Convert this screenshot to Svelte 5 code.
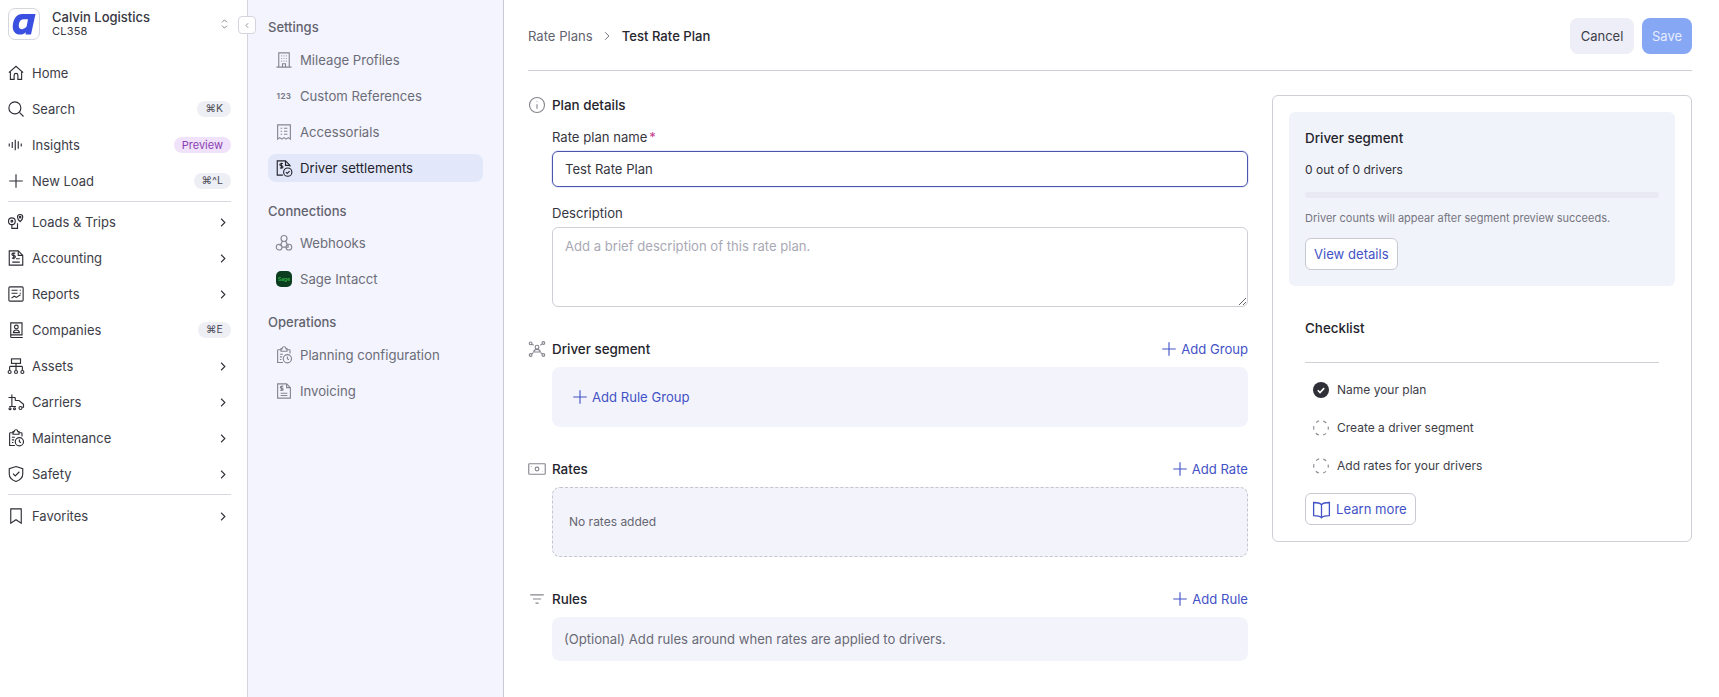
<script>
  const icons = {
    home: '<path d="M2.500 11.500 12 3l9.500 8.500"/><path d="M4.500 10v10.500h5V15a2.500 2.500 0 0 1 5 0v5.500h5V10"/>',
    search: '<circle cx="10.500" cy="10.500" r="8"/><path d="m16.500 16.500 5.500 5.500"/>',
    insights: '<path d="M3 10v4M7 8v8M11 5v14M15 7v10M19 10v4"/>',
    plus: '<path d="M12 3v18M3 12h18"/>',
    loads: '<circle cx="6.500" cy="11" r="4.500"/><circle cx="6.500" cy="11" r="1.200"/><path d="M6.500 15.500v5h7.500v-7"/><path d="M17.500 2a3.500 3.500 0 0 1 3.500 3.500c0 2.500-3.500 6-3.500 6s-3.500-3.500-3.500-6A3.500 3.500 0 0 1 17.500 2z"/><circle cx="17.500" cy="5.500" r="1"/>',
    accounting: '<path d="M3 2.500h12l6 6v13H3z"/><path d="M15 2.500v6h6"/><path d="M11 5.500H8.200a1.500 1.500 0 0 0 0 3.300h1.300a1.500 1.500 0 0 1 0 3.300H6.500M9 4.500v9"/><path d="M12 13h5M7 17.500h10"/>',
    reports: '<rect x="2.500" y="2.500" width="19" height="19" rx="1.500"/><path d="M6 7h8M6 11h8M17 7h1.500M17 11h1.500M6 17.500l3.500-2.500 3 1.500 5.500-3.500"/>',
    companies: '<path d="M5 2.500h15v16H5z"/><path d="M5 18.500v2.500a1 1 0 0 0 1 1h15"/><circle cx="12.500" cy="8" r="2.500"/><path d="M8.500 15.500c.3-2.500 1.800-3.500 4-3.500s3.700 1 4 3.500z"/>',
    assets: '<rect x="6" y="2.500" width="12" height="6"/><path d="M3.500 12.500h17M12 8.500v9M3.500 12.500v5M20.500 12.500v5"/><circle cx="3.500" cy="20" r="2"/><circle cx="12" cy="20" r="2"/><circle cx="20.500" cy="20" r="2"/>',
    carriers: '<path d="M2 6h9M6.500 2v16M3 18h9"/><path d="M11 10h5l6 5v4h-2M11 6v4"/><circle cx="4" cy="21" r="1.300"/><circle cx="10" cy="21" r="1.300"/><circle cx="18" cy="20" r="2"/>',
    maintenance: '<path d="M9 5H4.500a1 1 0 0 0-1 1v16h7"/><path d="M8 5V3.500h1.500a2.500 2.500 0 0 1 5 0H16V7H8z"/><path d="M16 5h3a1 1 0 0 1 1 1v4"/><path d="M6.500 11h4M6.500 14.500h3M6.500 18h2"/><circle cx="16.500" cy="17" r="5.500"/><path d="M16.500 14V17l2 1.200"/>',
    safety: '<path d="M12 2 21 5v7c0 5-3.500 8-9 10-5.500-2-9-5-9-10V5z"/><path d="m8 11.500 3 3 5.500-5.500"/>',
    bookmark: '<path d="M5 2.500h14v19l-7-4.500-7 4.500z"/>',
    building: '<path d="M5 21.500V2.500h14v19M2 21.500h20"/><path d="M8.500 6.500h1M11.500 6.500h1M14.500 6.500h1M8.500 10h1M11.500 10h1M14.500 10h1M8.500 13.500h1M11.500 13.500h1M14.500 13.500h1M10 21.500V17h4v4.500"/>',
    receipt: '<path d="M3.500 2.500h17v19l-2.800-2-2.800 2-2.900-2-2.800 2-2.800-2-2.900 2z"/><path d="M7.500 7h2M12 7h4.500M7.500 11h2M12 11h4.500M7.500 15h2M12 15h4.500"/>',
    settle: '<path d="M10.500 21.500H3V2.500h11l6 6v1.500"/><path d="M14 2.500v6h6"/><path d="M10.500 6H8a1.300 1.300 0 0 0 0 3h1a1.300 1.300 0 0 1 0 3H6.500M8.500 5v8"/><circle cx="17" cy="17.500" r="5.500"/><path d="m14.500 17.500 1.800 1.800 3.200-3.200"/>',
    webhook: '<circle cx="12" cy="6" r="4"/><circle cx="5.500" cy="17.500" r="3.800"/><circle cx="18.500" cy="17.500" r="3.800"/><path d="M10 9.500 6.500 16M14 9.500l4 7M9.300 17.500h9"/>',
    planning: '<path d="M9 5H4.500a1 1 0 0 0-1 1v16h7"/><path d="M8 5V3.500h1.500a2.500 2.500 0 0 1 5 0H16V7H8z"/><path d="M16 5h3a1 1 0 0 1 1 1v4"/><path d="M6.500 11h4M6.500 14.500h3M6.500 18h2"/><circle cx="16.500" cy="17" r="5.500"/><path d="M16.500 14V17l2 1.200"/>',
    invoice: '<path d="M3.500 2.500h12l5 5v14h-17z"/><path d="M15.500 2.500v5h5"/><path d="M11 5.500H8.500a1.200 1.200 0 0 0 0 2.800h1a1.200 1.200 0 0 1 0 2.800H7M9 4.500v7.500"/><path d="M7.500 15h9M7.500 18h9"/>',
    info: '<circle cx="12" cy="12" r="10"/><path d="M12 11v6M12 7v.5"/>',
    segment: '<circle cx="12" cy="9.500" r="2.500"/><path d="M7.500 16c.5-2.500 2-3.500 4.500-3.500s4 1 4.500 3.500z"/><circle cx="3.500" cy="4.500" r="1.800"/><circle cx="20.500" cy="4" r="1.800"/><circle cx="3.500" cy="20" r="1.800"/><circle cx="20.500" cy="20" r="1.800"/><path d="m5.500 5.500 2 1.500M18.500 5.500l-2 1.500M5 18.500l2-1.500M19 18.500 17 17"/>',
    cash: '<rect x="1" y="5" width="22" height="14" rx="1"/><circle cx="12" cy="12" r="2.500"/><path d="M4.500 8v.5M19.500 15.500v.5"/>',
    filter: '<path d="M3 6.500h18M6.500 12h11M10 17.500h4"/>',
    book: '<path d="M12 6.500C10 4.500 7 4 3 4v15c4 0 7 .5 9 2.500 2-2 5-2.500 9-2.500V4c-4 0-7 .5-9 2.500zM12 6.500v15"/>'
  };
  const chevron = 'chevron';
  const navTop = [
    { icon: 'home', label: 'Home' },
    { icon: 'search', label: 'Search', badge: '⌘K' },
    { icon: 'insights', label: 'Insights', preview: 'Preview' },
    { icon: 'plus', label: 'New Load', badge: '⌘^L' }
  ];
  const navMid = [
    { icon: 'loads', label: 'Loads & Trips', more: chevron },
    { icon: 'accounting', label: 'Accounting', more: chevron },
    { icon: 'reports', label: 'Reports', more: chevron },
    { icon: 'companies', label: 'Companies', badge: '⌘E' },
    { icon: 'assets', label: 'Assets', more: chevron },
    { icon: 'carriers', label: 'Carriers', more: chevron },
    { icon: 'maintenance', label: 'Maintenance', more: chevron },
    { icon: 'safety', label: 'Safety', more: chevron }
  ];
  const navEnd = [{ icon: 'bookmark', label: 'Favorites', more: chevron }];
  const groups = [
    { title: 'Settings', items: [
      { icon: 'building', label: 'Mileage Profiles' },
      { num: '123', label: 'Custom References' },
      { icon: 'receipt', label: 'Accessorials' },
      { icon: 'settle', label: 'Driver settlements', active: true }
    ]},
    { title: 'Connections', items: [
      { icon: 'webhook', label: 'Webhooks' },
      { sage: true, label: 'Sage Intacct' }
    ]},
    { title: 'Operations', items: [
      { icon: 'planning', label: 'Planning configuration' },
      { icon: 'invoice', label: 'Invoicing' }
    ]}
  ];
  const checklist = [
    { label: 'Name your plan', done: true },
    { label: 'Create a driver segment' },
    { label: 'Add rates for your drivers' }
  ];
</script>

{#snippet icon(name, cls)}
  <svg class="icon {cls}" viewBox="0 0 24 24" aria-hidden="true">{@html icons[name]}</svg>
{/snippet}

{#snippet navRow(item)}
  <div class="nav-row">
    {@render icon(item.icon, 'nav-icon')}
    <span class="nav-label">{item.label}</span>
    {#if item.badge}<span class="kbd">{item.badge}</span>{/if}
    {#if item.preview}<span class="preview">{item.preview}</span>{/if}
    {#if item.more}
      <svg class="chev" viewBox="0 0 8 12" aria-hidden="true"><path d="m1.500 1 5 5-5 5"/></svg>
    {/if}
  </div>
{/snippet}

{#snippet sectionHead(iconName, title, action)}
  <div class="sec-head">
    <span class="sec-icon">{@render icon(iconName, 'grey-icon')}</span>
    <span class="sec-title">{title}</span>
    {#if action}
      <span class="link add">{@render icon('plus', 'plus-icon')}{action}</span>
    {/if}
  </div>
{/snippet}

<div class="page">
  <aside class="sidebar">
    <div class="org">
      <div class="logo">
        <svg viewBox="1 1 30 30" aria-hidden="true">
          <path fill-rule="evenodd" fill="#3b50e0" d="M14 6H27.500L23 26.500H17.500l.4-2.300C16.300 25.700 14.500 26.500 12.200 26.500 7.300 26.500 4.200 23 4.800 17.200 5.500 10.500 9 6 14 6zM15.300 11.300c-2.500 0-4.200 2.300-4.500 5.500-.3 2.700.7 4.400 2.800 4.400 1.800 0 3.400-1 5-2.700l1.400-7.200z"/>
        </svg>
      </div>
      <div class="org-text">
        <div class="org-name">Calvin Logistics</div>
        <div class="org-code">CL358</div>
      </div>
      <svg class="updown" viewBox="0 0 8 12" aria-hidden="true"><path d="m1 4 3-3 3 3M1 8l3 3 3-3"/></svg>
    </div>
    <nav>
      {#each navTop as item}{@render navRow(item)}{/each}
      <div class="nav-div first-div"></div>
      {#each navMid as item}{@render navRow(item)}{/each}
      <div class="nav-div"></div>
      {#each navEnd as item}{@render navRow(item)}{/each}
    </nav>
    <button class="collapse" aria-label="Collapse">
      <svg viewBox="0 0 8 12" aria-hidden="true"><path d="M5.500 3 2.500 6l3 3"/></svg>
    </button>
  </aside>

  <aside class="settings">
    {#each groups as group}
      <div class="group">
        <div class="group-title">{group.title}</div>
        {#each group.items as item}
          <div class="set-row" class:active={item.active}>
            <span class="set-icon">
              {#if item.num}
                <span class="num">{item.num}</span>
              {:else if item.sage}
                <span class="sage">Sage</span>
              {:else}
                {@render icon(item.icon, item.active ? 'dark-icon' : 'grey-icon')}
              {/if}
            </span>
            <span>{item.label}</span>
          </div>
        {/each}
      </div>
    {/each}
  </aside>

  <main>
    <header>
      <div class="crumbs">
        <span class="crumb">Rate Plans</span>
        <svg class="crumb-chev" viewBox="0 0 8 12" aria-hidden="true"><path d="m1.500 1 5 5-5 5"/></svg>
        <span class="crumb-cur">Test Rate Plan</span>
      </div>
      <div class="actions">
        <button class="btn cancel">Cancel</button>
        <button class="btn save">Save</button>
      </div>
    </header>

    <div class="content">
      <div class="form">
        <section>
          {@render sectionHead('info', 'Plan details')}
          <div class="fields">
            <label class="field first">
              <span class="lab">Rate plan name<span class="req">*</span></span>
              <input class="input focus" value="Test Rate Plan" />
            </label>
            <label class="field">
              <span class="lab">Description</span>
              <textarea class="input area" placeholder="Add a brief description of this rate plan."></textarea>
            </label>
          </div>
        </section>

        <section>
          {@render sectionHead('segment', 'Driver segment', 'Add Group')}
          <div class="box rule-box">
            <span class="link">{@render icon('plus', 'plus-icon')}Add Rule Group</span>
          </div>
        </section>

        <section>
          {@render sectionHead('cash', 'Rates', 'Add Rate')}
          <div class="box rates-box">No rates added</div>
        </section>

        <section>
          {@render sectionHead('filter', 'Rules', 'Add Rule')}
          <div class="box rules-box">(Optional) Add rules around when rates are applied to drivers.</div>
        </section>
      </div>

      <div class="card">
        <div class="panel">
          <div class="card-title">Driver segment</div>
          <div class="count">0 out of 0 drivers</div>
          <div class="bar"></div>
          <div class="hint">Driver counts will appear after segment preview succeeds.</div>
          <button class="out-btn">View details</button>
        </div>
        <div class="check">
          <div class="card-title">Checklist</div>
          <div class="check-div"></div>
          {#each checklist as c}
            <div class="check-row">
              {#if c.done}
                <svg class="ck" viewBox="0 0 16 16" aria-hidden="true"><circle cx="8" cy="8" r="8" fill="#2f2f38"/><path d="m4.800 8.300 2.200 2.200 4.200-4.400" fill="none" stroke="#fff" stroke-width="1.600"/></svg>
              {:else}
                <svg class="ck" viewBox="0 0 16 16" aria-hidden="true"><circle cx="8" cy="8" r="7.300" fill="none" stroke="#8d8d98" stroke-width="1.200" stroke-dasharray="3.400 4.240" stroke-dashoffset="1.700"/></svg>
              {/if}
              <span>{c.label}</span>
            </div>
          {/each}
          <button class="out-btn learn">{@render icon('book', 'book-icon')}Learn more</button>
        </div>
      </div>
    </div>
  </main>
</div>

<style>
  :global(body) { margin: 0; background: #fff; }
  .page {
    display: flex;
    height: 697px;
    overflow: hidden;
    font-family: Inter, "DejaVu Sans", sans-serif;
    font-size: 13px;
    line-height: 20px;
    color: #3d3d47;
  }
  .icon { fill: none; stroke: currentColor; stroke-width: 1.500; display: block; flex: none; }

  .sidebar {
    position: relative;
    flex: none;
    box-sizing: border-box;
    width: 248px;
    padding: 0 16px 0 8px;
    border-right: 1px solid #d4d4dc;
    background: #fff;
  }
  .org { display: flex; align-items: center; height: 55px; box-sizing: border-box; }
  .logo {
    flex: none; width: 32px; height: 32px; box-sizing: border-box;
    border: 1px solid #d6d6de; border-radius: 7px;
    margin-top: -7px;
    display: flex; align-items: center; justify-content: center;
  }
  .logo svg { width: 30px; height: 30px; display: block; }
  .org-text { margin-left: 12px; flex: 1; margin-top: -9px; }
  .org-name { font-size: 13px; line-height: 16px; font-weight: 500; color: #36363f; }
  .org-code { font-size: 11px; line-height: 12px; color: #36363f; letter-spacing: .2px; }
  .updown { width: 7px; height: 10px; margin-right: 3px; margin-top: -7px; fill: none; stroke: #71717c; stroke-width: 1; }
  .nav-row { display: flex; align-items: center; height: 36px; }
  .nav-row .nav-label { flex: 1; margin-left: 7px; }
  :global(.nav-icon) { width: 18px; height: 18px; margin-left: -1px; color: #2c2c34; }
  .nav-div { height: 1px; background: #d8d8df; margin: 2px 0 3px; }
  .first-div { margin-bottom: 2px; }
  .kbd {
    display: flex; align-items: center; justify-content: center;
    height: 16px; min-width: 33px; padding: 0 8px; box-sizing: border-box;
    border-radius: 8px; background: #eeeef5; color: #4a4a55;
    font-size: 10.500px; line-height: 16px;
  }
  .preview {
    height: 16px; padding: 0 8px; border-radius: 8px;
    background: #f0e2fb; color: #8a3fb0; font-size: 11px; line-height: 16px;
  }
  .chev { width: 6px; height: 9px; margin-right: 5px; fill: none; stroke: #33333c; stroke-width: 1.500; }
  .collapse {
    position: absolute; left: 238px; top: 16px;
    width: 18px; height: 18px; padding: 0;
    border: 1px solid #d4d4dc; border-radius: 4px; background: #fff;
    display: flex; align-items: center; justify-content: center;
  }
  .collapse svg { width: 6px; height: 9px; fill: none; stroke: #8a8a95; stroke-width: 1.200; }

  .settings {
    flex: none;
    box-sizing: border-box;
    width: 256px;
    padding: 17px 20px 0;
    background: #f3f4fd;
    border-right: 1px solid #c9c9d2;
  }
  .group { margin-bottom: 19px; }
  .group-title { color: #62626e; font-weight: 500; font-size: 13px; margin-bottom: 9px; }
  .group:nth-child(2) .group-title { margin-bottom: 8px; }
  .set-row {
    display: flex; align-items: center; height: 28px;
    padding: 0 8px; border-radius: 8px; margin-bottom: 8px;
    color: #6c6c78; gap: 8px; font-size: 13.150px;
  }
  .set-row:last-child { margin-bottom: 0; }
  .set-row.active { background: #e2e8f9; color: #24242c; }
  .set-icon { width: 16px; height: 16px; display: flex; align-items: center; justify-content: center; flex: none; }
  :global(.grey-icon) { width: 18px; height: 18px; margin: -1px; color: #85858f; }
  :global(.dark-icon) { width: 18px; height: 18px; margin: -1px; color: #24242c; }
  .num { font-size: 8px; font-weight: 700; letter-spacing: .4px; color: #7b7b87; line-height: 16px; }
  .sage {
    width: 16px; height: 16px; border-radius: 5px; background: #0b3d1e; color: #35b34a;
    font-size: 5px; line-height: 16px; text-align: center; font-weight: 600;
  }

  main { flex: 1; min-width: 0; padding: 0 27px 0 24px; background: #fff; font-size: 13.100px; }
  header {
    display: flex; align-items: center; justify-content: space-between;
    height: 70px; border-bottom: 1px solid #cfcfd6;
  }
  .crumbs { display: flex; align-items: center; margin-top: 2px; }
  .crumb { color: #62626e; }
  .crumb-chev { width: 6px; height: 10px; margin: 0 12px 0 11px; fill: none; stroke: #62626e; stroke-width: 1.200; }
  .crumb-cur { color: #27272f; font-weight: 500; }
  .actions { display: flex; gap: 8px; margin-top: 2px; }
  .btn { height: 36px; border: 0; border-radius: 8px; font: 400 13px/20px Inter, sans-serif; padding: 0; }
  .cancel { width: 64px; background: #eeeef8; color: #3d3d47; }
  .save { width: 50px; background: #86a7f3; color: #e6edff; }

  .content { display: flex; gap: 24px; align-items: flex-start; padding-top: 24px; }
  .form { width: 720px; flex: none; display: flex; flex-direction: column; gap: 32px; }
  .sec-head { display: flex; align-items: center; height: 20px; }
  .sec-icon { width: 24px; flex: none; padding-left: 1px; box-sizing: border-box; }
  .sec-title { flex: 1; font-weight: 500; font-size: 13.400px; color: #24242c; }
  .link { display: inline-flex; align-items: center; color: #4352c6; font-size: 13.100px; }
  :global(.plus-icon) { width: 18px; height: 18px; margin-right: 3px; color: #4352c6; stroke-width: 1.750; }
  .fields { margin-left: 24px; }
  .field { display: block; margin-top: 16px; }
  .field.first { margin-top: 12px; }
  .lab { display: block; margin-bottom: 4px; font-size: 13.100px; color: #36363f; }
  .req { color: #c2378a; margin-left: 2px; }
  .input {
    display: block; width: 100%; box-sizing: border-box;
    height: 36px; padding: 0 12px; font: 13.100px/20px Inter, sans-serif; color: #36363f;
    border: 1px solid #cfcfd6; border-radius: 6px; background: #fff; outline: 0;
  }
  .input.focus { border-color: #4a55ad; box-shadow: 0 0 0 1px #e8eafa; }
  .area { height: 80px; padding: 8px 12px; resize: vertical; }
  .area::placeholder { color: #a9a9b5; opacity: 1; }
  .box {
    margin: 8px 0 0 24px; background: #f3f4fb; border-radius: 8px; box-sizing: border-box;
    display: flex; align-items: center;
  }
  .rule-box { height: 60px; padding-left: 19px; }
  .rates-box {
    height: 70px; padding-left: 16px; font-size: 12px; color: #666672;
    border: 1px dashed #c5c5ce;
  }
  .rules-box { height: 44px; padding-left: 12px; color: #6a6a76; font-size: 13.100px; }

  .card {
    width: 420px; flex: none; box-sizing: border-box; padding: 16px;
    border: 1px solid #cfcfd6; border-radius: 6px; height: 447px;
  }
  .panel { background: #f1f3fa; border-radius: 6px; padding: 16px; height: 174px; box-sizing: border-box; }
  .card-title { font-weight: 500; font-size: 13.400px; color: #24242c; }
  .count { margin-top: 12px; font-size: 12px; color: #2f2f38; }
  .bar { margin-top: 12px; height: 6px; border-radius: 3px; background: #e8e9f3; }
  .hint { margin-top: 10px; font-size: 11px; color: #757581; }
  .out-btn {
    display: inline-flex; align-items: center; height: 32px; padding: 0 8px;
    margin-top: 10px;
    border: 1px solid #c9c9d2; border-radius: 6px; background: #fff; color: #4352c6;
    font: 13.100px/20px Inter, sans-serif;
  }
  .check { padding: 32px 16px 0; }
  .check-div { height: 1px; background: #cfcfd6; margin-top: 24px; margin-bottom: 13px; }
  .check-row {
    display: flex; align-items: center; height: 28px; margin-bottom: 10px;
    padding-left: 8px; gap: 8px; font-size: 12px; color: #3d3d47;
  }
  .ck { width: 16px; height: 16px; flex: none; }
  .learn { margin-top: 3px; }
  :global(.book-icon) { width: 21px; height: 21px; margin: 0 4px 0 -3px; color: #4352c6; stroke-width: 1.300; }
</style>
